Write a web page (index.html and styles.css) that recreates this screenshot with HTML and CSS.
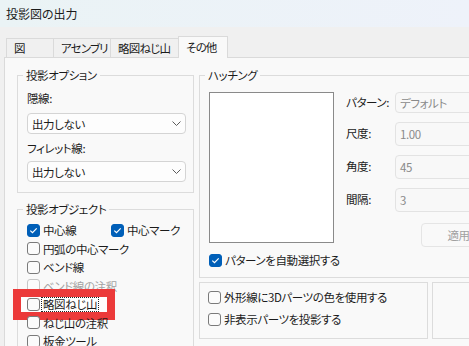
FILE: index.html
```html
<!DOCTYPE html>
<html lang="ja">
<head>
    <meta charset="UTF-8">
    <meta name="viewport" content="width=device-width, initial-scale=1.0">
    <title>投影図の出力</title>
    <link rel="stylesheet" href="styles.css">
</head>
<body>

<div class="titlebar">投影図の出力</div>

<div class="dialog">
    <div class="tabs">
        <div class="tab tab-1">図</div>
        <div class="tab tab-2">アセンブリ</div>
        <div class="tab tab-3">略図ねじ山</div>
        <div class="tab tab-4 active">その他</div>
    </div>

    <div class="panel">
        <div class="col-left">
            <fieldset class="group opts">
                <legend>投影オプション</legend>
                <div class="field-label first">隠線:</div>
                <div class="select">
                    <span>出力しない</span>
                    <svg width="9" height="5" viewBox="0 0 9 5"><path d="M0.5 0.5 L4.5 4.5 L8.5 0.5" fill="none" stroke="#5c5c5c" stroke-width="1"/></svg>
                </div>
                <div class="field-label">フィレット線:</div>
                <div class="select second">
                    <span>出力しない</span>
                    <svg width="9" height="5" viewBox="0 0 9 5"><path d="M0.5 0.5 L4.5 4.5 L8.5 0.5" fill="none" stroke="#5c5c5c" stroke-width="1"/></svg>
                </div>
            </fieldset>

            <fieldset class="group objs">
                <legend>投影オブジェクト</legend>
                <div class="check-grid">
                    <div class="check"><span class="cb on"><svg width="11" height="11" viewBox="0 0 11 11"><path d="M2.3 5.6 L4.5 7.7 L8.7 3.3" fill="none" stroke="#fff" stroke-width="1.2"/></svg></span>中心線</div>
                    <div class="check"><span class="cb on"><svg width="11" height="11" viewBox="0 0 11 11"><path d="M2.3 5.6 L4.5 7.7 L8.7 3.3" fill="none" stroke="#fff" stroke-width="1.2"/></svg></span>中心マーク</div>
                    <div class="check wide"><span class="cb"></span>円弧の中心マーク</div>
                    <div class="check wide"><span class="cb"></span>ベンド線</div>
                    <div class="check wide disabled"><span class="cb"></span>ベンド線の注釈</div>
                    <div class="check wide">
                        <span class="mark"><span class="cb"></span><span class="focus">略図ねじ山</span></span>
                    </div>
                    <div class="check wide"><span class="cb"></span>ねじ山の注釈</div>
                    <div class="check wide"><span class="cb"></span>板金ツール</div>
                </div>
            </fieldset>
        </div>

        <div class="col-right">
            <fieldset class="group hatch">
                <legend>ハッチング</legend>
                <div class="hatch-top">
                    <div class="preview"></div>
                    <div class="hatch-fields">
                        <div class="hf-label">パターン:</div>
                        <div class="hf-input">デフォルト</div>
                        <div class="hf-label">尺度:</div>
                        <div class="hf-input">1.00</div>
                        <div class="hf-label">角度:</div>
                        <div class="hf-input">45</div>
                        <div class="hf-label">間隔:</div>
                        <div class="hf-input">3</div>
                        <div class="apply">適用</div>
                    </div>
                </div>
                <div class="check auto"><span class="cb on"><svg width="11" height="11" viewBox="0 0 11 11"><path d="M2.3 5.6 L4.5 7.7 L8.7 3.3" fill="none" stroke="#fff" stroke-width="1.2"/></svg></span>パターンを自動選択する</div>
            </fieldset>

            <div class="bottom-row">
                <div class="box">
                    <div class="check tall"><span class="cb"></span>外形線に3Dパーツの色を使用する</div>
                    <div class="check tall"><span class="cb"></span>非表示パーツを投影する</div>
                </div>
                <div class="box side"></div>
            </div>
        </div>
    </div>
</div>

</body>
</html>
```

FILE: styles.css
```css
body {
    margin: 0;
    width: 469px;
    height: 346px;
    overflow: hidden;
    background-color: #f0f0f0;
    font-family: "Noto Sans CJK JP", "Noto Sans", sans-serif;
    font-feature-settings: "palt";
    font-size: 11.5px;
    letter-spacing: -0.4px;
    color: #1b1b1b;
}

.titlebar {
    height: 27px;
    line-height: 27px;
    padding-left: 6px;
    font-size: 12px;
    letter-spacing: 0;
    background: linear-gradient(to right, #eaf3f5, #eef2fa);
}

.dialog {
    padding: 9px 0 0 4px;
    width: 560px;
}

/* tabs */
.tabs {
    display: flex;
    align-items: flex-end;
    height: 21px;
    padding-left: 2px;
}

.tab {
    box-sizing: border-box;
    height: 19px;
    line-height: 18px;
    padding-left: 7px;
    white-space: nowrap;
    letter-spacing: -0.8px;
    border: 1px solid #dadada;
    border-bottom: none;
    border-right: none;
}

.tab-1 { width: 47px; }
.tab-2 { width: 57px; }
.tab-3 { width: 68px; }
.tab-4 { width: 50px; }

.tab.active {
    position: relative;
    height: 22px;
    line-height: 20px;
    margin-bottom: -1px;
    background-color: #f9f9f9;
    border-right: 1px solid #dadada;
}

.panel {
    display: flex;
    gap: 5px;
    height: 300px;
    padding: 9px 0 0 12px;
    background-color: #f9f9f9;
    border-top: 1px solid #dadada;
    border-left: 1px solid #dadada;
}

/* group boxes */
.group {
    margin: 0;
    min-width: 0;
    border: 1px solid #dcdcdc;
}

.group legend {
    padding: 0 3px;
    margin-left: -4px;
    line-height: 16px;
}

.col-left {
    display: flex;
    flex-direction: column;
    width: 177px;
    flex-shrink: 0;
}

.opts {
    padding: 0 7px 10px 9px;
}

.field-label {
    line-height: 16px;
    margin-top: 6px;
}

.field-label.first {
    margin-top: 7px;
}

.select {
    box-sizing: border-box;
    display: flex;
    align-items: center;
    justify-content: space-between;
    height: 21px;
    margin-top: 7px;
    padding: 0 4px 0 4px;
    background-color: #fdfdfd;
    border: 1px solid #d4d4d4;
    border-radius: 4px;
}

.select.second {
    margin-top: 5px;
}

.objs {
    margin-top: 8px;
    padding: 4px 7px 0 9px;
    flex: 1;
}

.check-grid {
    display: grid;
    grid-template-columns: 84px 1fr;
}

.check {
    display: flex;
    align-items: center;
    gap: 3px;
    height: 18.5px;
    white-space: nowrap;
}

.check.wide {
    grid-column: 1 / 3;
}

.cb {
    box-sizing: border-box;
    display: inline-flex;
    align-items: center;
    justify-content: center;
    width: 13px;
    height: 13px;
    flex-shrink: 0;
    border: 1px solid #7a7a7a;
    border-radius: 3px;
    background-color: #fbfbfb;
}

.cb.on {
    background-color: #005fb8;
    border-color: #005fb8;
}

.check.disabled {
    color: #a3a3a3;
}

.check.disabled .cb {
    border-color: #c6c6c6;
}

/* annotation around the current item */
.mark {
    display: inline-flex;
    align-items: center;
    gap: 1px;
    height: 15px;
    margin-left: -6px;
    padding: 0 8px 0 6px;
    background-color: #fff;
    outline: 8px solid #ec3a3a;
}

.focus {
    box-sizing: border-box;
    height: 15px;
    line-height: 13px;
    padding: 0 1px;
    border: 1px dotted #222;
}

/* right column */
.col-right {
    display: flex;
    flex-direction: column;
    width: 320px;
    flex-shrink: 0;
}

.hatch {
    padding: 9px 0 8px 9px;
}

.hatch-top {
    display: flex;
}

.preview {
    box-sizing: border-box;
    width: 125px;
    height: 151px;
    background-color: #fff;
    border: 1px solid #8a8a8a;
}

.hatch-fields {
    display: grid;
    grid-template-columns: 49px 101px;
    grid-template-rows: 21px 24px 24px 24px;
    row-gap: 9px;
    align-items: center;
    margin-left: 12px;
}

.hf-label {
    margin-top: -2px;
}

.hf-input {
    box-sizing: border-box;
    height: 100%;
    display: flex;
    align-items: center;
    padding-left: 4px;
    color: #8a8a8a;
    background-color: #f8f8f8;
    border: 1px solid #e3e3e3;
    border-radius: 4px;
}

.apply {
    grid-column: 2;
    justify-self: end;
    box-sizing: border-box;
    width: 75px;
    height: 24px;
    margin-top: 2px;
    line-height: 22px;
    text-align: center;
    color: #a0a0a0;
    border: 1px solid #e5e5e5;
    border-radius: 4px;
}

.check.auto {
    height: 18px;
    margin-top: 4px;
}

.bottom-row {
    display: flex;
    gap: 4px;
    margin-top: 4px;
}

.box {
    box-sizing: border-box;
    width: 264px;
    height: 57px;
    padding: 3px 0 0 8px;
    border: 1px solid #dcdcdc;
}

.box.side {
    width: 100px;
}

.check.tall {
    height: 22px;
}
```
